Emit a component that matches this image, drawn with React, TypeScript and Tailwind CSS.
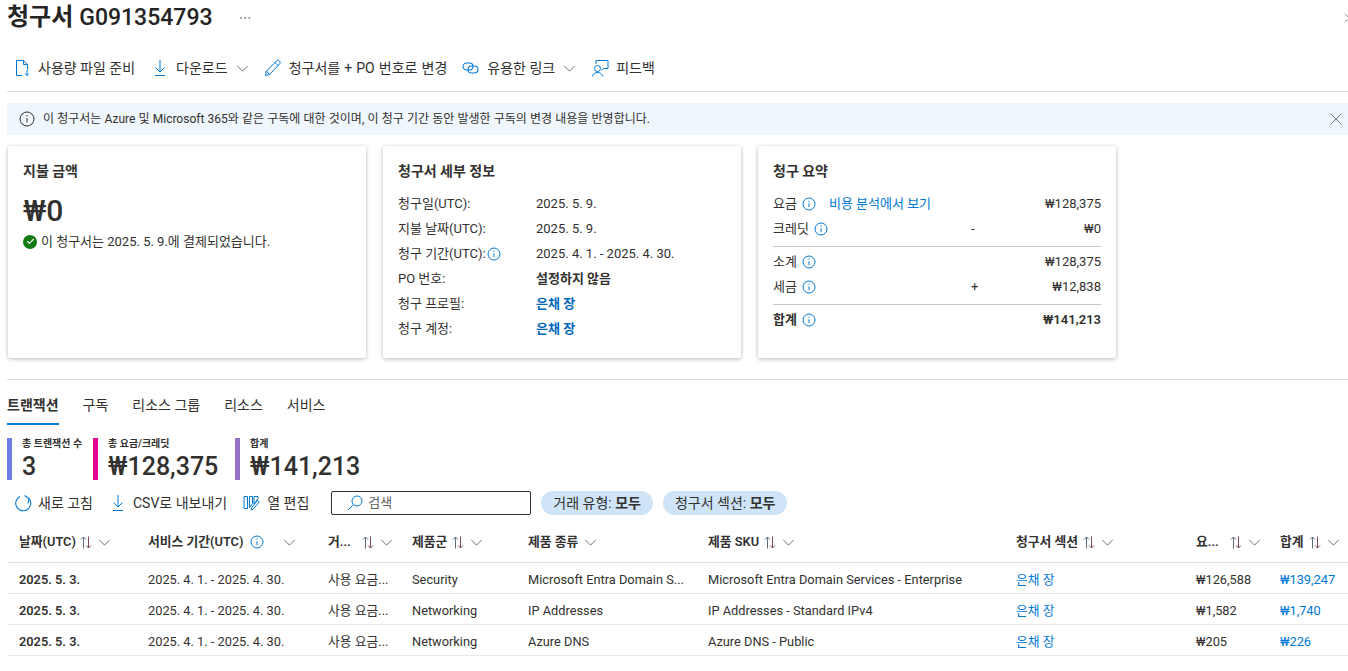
import React from "react";
import { ChevronRight, MoreHorizontal, X, Check } from "lucide-react";

const FONT = "font-['Roboto','Noto_Sans_CJK_KR',sans-serif]";

interface TxRow {
  section: string;
  group: string;
  type: string;
  sku: string;
  charge: string;
  total: string;
}

const rows: TxRow[] = [
  {
    section: "은채 장",
    group: "Security",
    type: "Microsoft Entra Domain S...",
    sku: "Microsoft Entra Domain Services - Enterprise",
    charge: "₩126,588",
    total: "₩139,247",
  },
  {
    section: "은채 장",
    group: "Networking",
    type: "IP Addresses",
    sku: "IP Addresses - Standard IPv4",
    charge: "₩1,582",
    total: "₩1,740",
  },
  {
    section: "은채 장",
    group: "Networking",
    type: "Azure DNS",
    sku: "Azure DNS - Public",
    charge: "₩205",
    total: "₩226",
  },
];

const gridCols = "grid grid-cols-[129px_180px_84px_116px_180px_308px_180px_84px_1fr]";

function InfoIcon({ className = "" }: { className?: string }) {
  return (
    <svg viewBox="0 0 14 14" className={`h-[14px] w-[14px] shrink-0 ${className}`} fill="none" stroke="#0078d4" strokeWidth="1">
      <circle cx="7" cy="7" r="6" />
      <path d="M7 6.200v4" />
      <circle cx="7" cy="4.200" r=".6" fill="#0078d4" stroke="none" />
    </svg>
  );
}

function Chevron({ className = "" }: { className?: string }) {
  return (
    <svg viewBox="0 0 14 8" className={`h-[7px] w-[13px] shrink-0 ${className}`} fill="none" stroke="#605e5c" strokeWidth="1">
      <path d="M1 1l6 6 6-6" />
    </svg>
  );
}

// thin up/down arrows used in the column headers
function SortIcon() {
  return (
    <svg viewBox="0 0 12 13" className="h-[13px] w-3 shrink-0" fill="none" strokeWidth="1">
      <path d="M3.500 12.500V1M1 3.500L3.500 1 6 3.500" stroke="#5c6b7a" />
      <path d="M8.500 .5V12M6 9.500L8.500 12 11 9.500" stroke="#7a4a5a" />
    </svg>
  );
}

function FileIcon() {
  return (
    <svg viewBox="0 0 16 18" className="h-[18px] w-4 shrink-0" fill="none" stroke="#0078d4" strokeWidth="1">
      <path d="M7 16.500H1.500v-15h7l4 4v5" />
      <path d="M8.500 1.500v4h4" />
      <path d="M12 11v5.500M10 14.500l2 2 2-2" />
    </svg>
  );
}

function DownloadIcon() {
  return (
    <svg viewBox="0 0 16 18" className="h-[18px] w-4 shrink-0" fill="none" stroke="#0078d4" strokeWidth="1">
      <path d="M8 1v12M3.500 8.500L8 13l4.500-4.500" />
      <path d="M3 16.500h10" />
    </svg>
  );
}

function PencilIcon() {
  return (
    <svg viewBox="0 0 18 18" className="h-[18px] w-[18px] shrink-0" fill="none" stroke="#0078d4" strokeWidth="1">
      <path d="M1.500 16.500l1-4.500L12.500 2c1-1 2.200-1 3 0s.8 2 0 3L5.500 15.500z" />
      <path d="M11 3.500L14.500 7M2.500 12l3 3.500" />
    </svg>
  );
}

function LinkIcon() {
  return (
    <svg viewBox="0 0 17 14" className="h-[14px] w-[17px] shrink-0" fill="none" stroke="#0078d4" strokeWidth="1.100">
      <rect x="1" y="2" width="10" height="7" rx="3.500" />
      <rect x="6" y="5" width="10" height="7" rx="3.500" />
    </svg>
  );
}

function FeedbackIcon() {
  return (
    <svg viewBox="0 0 18 18" className="h-[18px] w-[18px] shrink-0" fill="none" stroke="#0078d4" strokeWidth="1">
      <circle cx="6.500" cy="9.500" r="3" />
      <path d="M1.500 17.500c.3-2.500 2.300-4 5-4s4.700 1.500 5 4" />
      <path d="M5 5V1.500h12v8h-4.500l-2 2" />
    </svg>
  );
}

function RefreshIcon() {
  return (
    <svg viewBox="0 0 18 18" className="h-[18px] w-[18px] shrink-0" fill="none" stroke="#0078d4" strokeWidth="1.100">
      <path d="M6 2.500a7.500 7.500 0 109 2" />
      <path d="M10.500 1.500L15 4.500l-1 5" />
    </svg>
  );
}

function ColumnsIcon() {
  return (
    <svg viewBox="0 0 17 16" className="h-4 w-[17px] shrink-0" fill="none" stroke="#0078d4" strokeWidth="1">
      <path d="M1 1.500h3.500v12H1zM6.500 1.500h3v7l-3 4zM11 1.500h4v2l-4 5.500z" />
      <path d="M8 15l.7-2.500L14.500 5.500l1.800 1.500-6 7z" />
    </svg>
  );
}

function SearchIcon() {
  return (
    <svg viewBox="0 0 16 16" className="h-4 w-4 shrink-0" fill="none" stroke="#0078d4" strokeWidth="1">
      <circle cx="10" cy="6" r="5" />
      <path d="M6.500 9.500L1 15" />
    </svg>
  );
}

function Toolbtn({
  icon,
  label,
  chevron,
  className = "",
}: {
  icon: React.ReactNode;
  label: string;
  chevron?: boolean;
  className?: string;
}) {
  return (
    <div className={`flex items-center text-[14px] text-[#323130] ${className}`}>
      {icon}
      <span>{label}</span>
      {chevron && <Chevron />}
    </div>
  );
}

function Card({ title, children }: { title: string; children?: React.ReactNode }) {
  return (
    <div className="h-[212px] w-[358px] rounded-[2px] bg-white px-[15px] pt-[15px] shadow-[0_1px_4px_rgba(0,0,0,0.28)]">
      <div className="text-[14px] font-semibold leading-[20px] text-[#323130]">{title}</div>
      {children}
    </div>
  );
}

function DetailRow({ label, info, children }: { label: string; info?: boolean; children: React.ReactNode }) {
  return (
    <div className="flex h-[25px] items-center text-[13px]">
      <div className="flex w-[138px] items-center gap-[1px] text-[#323130]">
        <span>{label}</span>
        {info && <InfoIcon />}
      </div>
      {children}
    </div>
  );
}

function SummaryRow({
  label,
  sign,
  amount,
  link,
  bold,
}: {
  label: string;
  sign?: string;
  amount: string;
  link?: boolean;
  bold?: boolean;
}) {
  return (
    <div className={`relative flex h-[25px] items-center justify-between text-[13px] text-[#323130] ${bold ? "font-semibold" : ""}`}>
      <div className="flex items-center gap-[5px]">
        <span>{label}</span>
        <InfoIcon />
        {link && <span className="ml-[8px] font-normal text-[#0078d4]">비용 분석에서 보기</span>}
      </div>
      {sign && <span className="absolute left-[198px]">{sign}</span>}
      <span>{amount}</span>
    </div>
  );
}

function Kpi({ color, label, value, width }: { color: string; label: string; value: string; width: string }) {
  return (
    <div className={`flex h-[42px] ${width}`}>
      <div className={`h-full w-[5px] ${color}`} />
      <div className="pl-[10px]">
        <div className="text-[10px] font-semibold leading-[12px] text-[#323130]">{label}</div>
        <div className="mt-[2px] text-[25px] font-medium leading-[30px] text-[#323130]">{value}</div>
      </div>
    </div>
  );
}

function Th({ label, sort = true, info, chevronClass = "ml-[6px]", sortClass = "ml-[5px]" }: { label: string; sort?: boolean; info?: boolean; chevronClass?: string; sortClass?: string }) {
  return (
    <div className="flex items-center pb-[1px] pl-[12px] text-[12.800px] font-semibold text-[#323130]">
      <span className="whitespace-nowrap">{label}</span>
      {info && <InfoIcon className="ml-[7px]" />}
      {sort && <span className={sortClass}><SortIcon /></span>}
      <Chevron className={chevronClass} />
    </div>
  );
}

function Td({ children, className = "" }: { children: React.ReactNode; className?: string }) {
  return <div className={`whitespace-nowrap pl-[12px] ${className}`}>{children}</div>;
}

export default function App() {
  return (
    <div className={`${FONT} h-[671px] w-[1348px] overflow-hidden bg-white pl-[7px]`}>
      {/* title */}
      <div className="flex h-[35px] items-center">
        <h1 className="text-[24px] font-semibold leading-[32px] text-[#252423]">
          청구서 <span className="text-[23px] font-medium">G091354793</span>
        </h1>
        <MoreHorizontal className="ml-[25px] h-[14px] w-[14px] text-[#605e5c]" strokeWidth={1} />
        <ChevronRight className="ml-auto mr-[-7px] h-4 w-4 text-[#605e5c]" strokeWidth={1} />
      </div>

      {/* command bar */}
      <div className="flex h-[57px] items-center border-b border-[#dcdcdc] pl-[8px] pt-[10px]">
        <Toolbtn icon={<FileIcon />} label="사용량 파일 준비" className="gap-[7px]" />
        <Toolbtn icon={<DownloadIcon />} label="다운로드" chevron className="ml-[17px] gap-[8px]" />
        <Toolbtn icon={<PencilIcon />} label="청구서를 + PO 번호로 변경" className="ml-[15px] gap-[7px] [word-spacing:0.6px]" />
        <Toolbtn icon={<LinkIcon />} label="유용한 링크" chevron className="ml-[15px] gap-[8px]" />
        <Toolbtn icon={<FeedbackIcon />} label="피드백" className="ml-[15px] gap-[7px]" />
      </div>

      {/* info banner */}
      <div className="mt-[11px] flex h-[32px] items-center bg-[#eff6fc] pl-[12px] pr-[2px] text-[12px] text-[#323130] [word-spacing:0.2px]">
        <svg viewBox="0 0 16 16" className="mr-[8px] h-4 w-4 shrink-0" fill="none" stroke="#323130" strokeWidth="1">
          <circle cx="8" cy="8" r="7" />
          <path d="M8 7v4.500" />
          <circle cx="8" cy="4.800" r=".7" fill="#323130" stroke="none" />
        </svg>
        <span>이 청구서는 Azure 및 Microsoft 365와 같은 구독에 대한 것이며, 이 청구 기간 동안 발생한 구독의 변경 내용을 반영합니다.</span>
        <X className="ml-auto h-5 w-5 text-[#605e5c]" strokeWidth={1} />
      </div>

      {/* cards */}
      <div className="mt-[11px] flex gap-[17px] pl-[1px]">
        <Card title="지불 금액">
          <div className="mt-[11px] text-[30px] font-medium leading-[38px] text-[#323130]">₩0</div>
          <div className="mt-[2px] flex items-center gap-[4px] text-[13px] text-[#323130]">
            <span className="flex h-[14px] w-[14px] items-center justify-center rounded-full bg-[#107c10]">
              <Check className="h-[9px] w-[9px] text-white" strokeWidth={3} />
            </span>
            <span>이 청구서는 2025. 5. 9.에 결제되었습니다.</span>
          </div>
        </Card>
        <Card title="청구서 세부 정보">
          <div className="mt-[10px]">
            <DetailRow label="청구일(UTC):"><span className="text-[#323130]">2025. 5. 9.</span></DetailRow>
            <DetailRow label="지불 날짜(UTC):"><span className="text-[#323130]">2025. 5. 9.</span></DetailRow>
            <DetailRow label="청구 기간(UTC):" info><span className="text-[#323130]">2025. 4. 1. - 2025. 4. 30.</span></DetailRow>
            <DetailRow label="PO 번호:"><span className="font-semibold text-[#323130]">설정하지 않음</span></DetailRow>
            <DetailRow label="청구 프로필:"><span className="font-semibold text-[#0067b8]">은채 장</span></DetailRow>
            <DetailRow label="청구 계정:"><span className="font-semibold text-[#0067b8]">은채 장</span></DetailRow>
          </div>
        </Card>
        <Card title="청구 요약">
          <div className="mt-[10px]">
            <SummaryRow label="요금" amount="₩128,375" link />
            <SummaryRow label="크레딧" sign="-" amount="₩0" />
            <div className="mb-[2px] mt-[5px] border-t border-[#c8c8c8]" />
            <SummaryRow label="소계" amount="₩128,375" />
            <SummaryRow label="세금" sign="+" amount="₩12,838" />
            <div className="mb-[2px] mt-[5px] border-t border-[#c8c8c8]" />
            <SummaryRow label="합계" amount="₩141,213" bold />
          </div>
        </Card>
      </div>

      <div className="mt-[21px] border-t border-[#dcdcdc]" />

      {/* tabs */}
      <div className="mt-[15px] flex gap-[24px] text-[14px] text-[#323130]">
        <div className="h-[30px] border-b-2 border-[#0078d4] font-semibold">트랜잭션</div>
        <div>구독</div>
        <div>리소스 그룹</div>
        <div>리소스</div>
        <div>서비스</div>
      </div>

      {/* totals */}
      <div className="mt-[13px] flex">
        <Kpi color="bg-[#6b7ee8]" label="총 트랜잭션 수" value="3" width="w-[86px]" />
        <Kpi color="bg-[#e3008c]" label="총 요금/크레딧" value="₩128,375" width="w-[142px]" />
        <Kpi color="bg-[#9573c4]" label="합계" value="₩141,213" width="w-[140px]" />
      </div>

      {/* table toolbar */}
      <div className="mt-[8px] flex h-[30px] items-center pl-[7px]">
        <div className="flex items-center gap-[6px] text-[14px] text-[#323130]">
          <RefreshIcon />
          <span>새로 고침</span>
        </div>
        <div className="ml-[17px] flex items-center gap-[7px] text-[14px] text-[#323130]">
          <DownloadIcon />
          <span>CSV로 내보내기</span>
        </div>
        <div className="ml-[16px] flex items-center gap-[7px] text-[14px] text-[#323130]">
          <ColumnsIcon />
          <span>열 편집</span>
        </div>
        <div className="ml-[22px] flex h-[24px] w-[200px] items-center gap-[5px] rounded-[2px] border border-[#323130] pl-[15px] text-[13px] text-[#605e5c]">
          <SearchIcon />
          <span>검색</span>
        </div>
        <div className="ml-[10px] flex h-[24px] items-center rounded-full bg-[#cfe4f7] px-[12px] text-[14px] text-[#323130]">
          거래 유형:&nbsp;<b className="font-semibold">모두</b>
        </div>
        <div className="ml-[10px] flex h-[24px] items-center rounded-full bg-[#cfe4f7] px-[12px] text-[14px] text-[#323130]">
          청구서 섹션:&nbsp;<b className="font-semibold">모두</b>
        </div>
      </div>

      {/* table */}
      <div className={`${gridCols} mt-[5px] h-[40px] border-b border-[#e1e1e1]`}>
        <Th label="날짜(UTC)" sortClass="ml-[4px]" />
        <Th label="서비스 기간(UTC)" sort={false} info chevronClass="ml-[19px]" />
        <Th label="거..." sortClass="ml-[11px]" />
        <Th label="제품군" />
        <Th label="제품 종류" sort={false} />
        <Th label="제품 SKU" />
        <Th label="청구서 섹션" />
        <Th label="요..." sortClass="ml-[11px]" />
        <Th label="합계" />
      </div>
      {rows.map((r, i) => (
        <div key={i} className={`${gridCols} h-[31px] items-center border-b border-[#e8e8e8] pt-[3px] text-[12.800px] text-[#323130]`}>
          <Td className="font-semibold">2025. 5. 3.</Td>
          <Td>2025. 4. 1. - 2025. 4. 30.</Td>
          <Td>사용 요금...</Td>
          <Td>{r.group}</Td>
          <Td>{r.type}</Td>
          <Td>{r.sku}</Td>
          <Td className="text-[#0078d4]">{r.section}</Td>
          <Td>{r.charge}</Td>
          <Td className="text-[#0078d4]">{r.total}</Td>
        </div>
      ))}
    </div>
  );
}
